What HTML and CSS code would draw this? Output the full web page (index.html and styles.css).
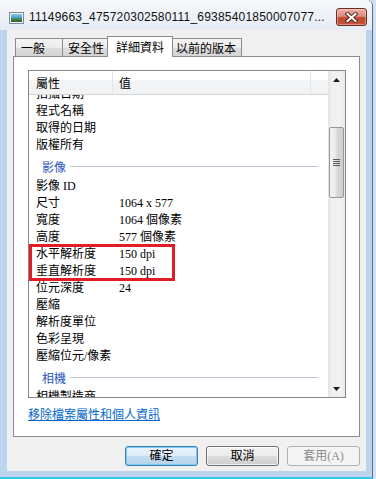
FILE: index.html
```html
<!DOCTYPE html>
<html>
<head>
  <meta charset="UTF-8">
  <title>內容</title>
  <link rel="stylesheet" href="styles.css">
</head>
<body>

  <div class="window">
    <!-- Title bar -->
    <div class="titlebar">
      <svg class="app-icon" width="15" height="12" viewBox="0 0 15 12">
        <defs>
          <linearGradient id="sky" x1="0" y1="0" x2="0" y2="1">
            <stop offset="0" stop-color="#8fc6ee"/>
            <stop offset="0.55" stop-color="#3f95d0"/>
            <stop offset="0.56" stop-color="#4f8f5a"/>
            <stop offset="1" stop-color="#2d5a35"/>
          </linearGradient>
        </defs>
        <rect x="0.5" y="0.5" width="14" height="11" fill="#f4f6f8" stroke="#7d8b99"/>
        <rect x="2" y="2" width="11" height="8" fill="url(#sky)"/>
      </svg>
      <span class="title">11149663_475720302580111_69385401850007077...</span>
      <button class="close-btn">
        <svg width="13" height="11" viewBox="0 0 13 11">
          <path d="M2.5 2 L10.5 9 M10.5 2 L2.5 9" stroke="#5b2820" stroke-width="4" stroke-linecap="square"/>
          <path d="M2.5 2 L10.5 9 M10.5 2 L2.5 9" stroke="#fff" stroke-width="2" stroke-linecap="square"/>
        </svg>
      </button>
    </div>

    <!-- Client area -->
    <div class="client">
      <div class="tabs">
        <div class="tab tab-first">一般</div>
        <div class="tab">安全性</div>
        <div class="tab active">詳細資料</div>
        <div class="tab">以前的版本</div>
      </div>

      <div class="panel">
        <div class="listview">
          <div class="list-main">
            <div class="list-header">
              <div class="hcol">屬性</div>
              <div class="hcol">值</div>
              <div class="hcol hcol-rest"></div>
            </div>
            <div class="rows-clip">
              <div class="rows">
                <div class="row"><span>拍攝日期</span><span></span></div>
                <div class="row"><span>程式名稱</span><span></span></div>
                <div class="row"><span>取得的日期</span><span></span></div>
                <div class="row"><span>版權所有</span><span></span></div>
                <div class="group"><span>影像</span><i></i></div>
                <div class="row"><span>影像 ID</span><span></span></div>
                <div class="row"><span>尺寸</span><span>1064 x 577</span></div>
                <div class="row"><span>寬度</span><span>1064 個像素</span></div>
                <div class="row"><span>高度</span><span>577 個像素</span></div>
                <div class="row"><span>水平解析度</span><span>150 dpi</span></div>
                <div class="row"><span>垂直解析度</span><span>150 dpi</span></div>
                <div class="row"><span>位元深度</span><span>24</span></div>
                <div class="row"><span>壓縮</span><span></span></div>
                <div class="row"><span>解析度單位</span><span></span></div>
                <div class="row"><span>色彩呈現</span><span></span></div>
                <div class="row"><span>壓縮位元/像素</span><span></span></div>
                <div class="group"><span>相機</span><i></i></div>
                <div class="row"><span>相機製造商</span><span></span></div>
              </div>
            </div>
          </div>

          <div class="scrollbar">
            <div class="sb-btn">
              <svg width="7" height="4" viewBox="0 0 7 4"><polygon points="3.5,0 7,4 0,4" fill="#1a1a1a"/></svg>
            </div>
            <div class="sb-track">
              <div class="sb-thumb">
                <svg width="7" height="8" viewBox="0 0 7 8">
                  <path d="M0 0.5 H7 M0 2.5 H7 M0 4.5 H7 M0 6.5 H7" stroke="#5a5a5a" stroke-width="1"/>
                </svg>
              </div>
            </div>
            <div class="sb-btn">
              <svg width="7" height="4" viewBox="0 0 7 4"><polygon points="0,0 7,0 3.5,4" fill="#1a1a1a"/></svg>
            </div>
          </div>

          <!-- red marker drawn over the two resolution rows -->
          <div class="highlight"></div>
        </div>

        <a class="remove-link" href="#">移除檔案屬性和個人資訊</a>
      </div>

      <div class="buttons">
        <button class="btn btn-default">確定</button>
        <button class="btn">取消</button>
        <button class="btn" disabled>套用(A)</button>
      </div>
    </div>
  </div>

</body>
</html>
```

FILE: styles.css
```css
* {
  box-sizing: border-box;
}

html, body {
  margin: 0;
  padding: 0;
  height: 100%;
  overflow: hidden;
  background: #d3e2f2;
}

body {
  font-family: "Liberation Serif", "Noto Sans CJK TC", serif;
  font-size: 12px;
  color: #000;
}

/* Window frame */
.window {
  width: 373px;
  height: 479px;
  display: flex;
  flex-direction: column;
  background: #bcd4ee;
  border-right: 1px solid #5b6c80;
  border-bottom: 2px solid #38c8ea;
  border-top-right-radius: 6px;
  overflow: hidden;
}

.titlebar {
  height: 30px;
  flex-shrink: 0;
  display: flex;
  align-items: center;
  padding: 4px 5px 0 9px;
  background: linear-gradient(#f6f8fb, #e6ecf4);
}

.app-icon {
  flex-shrink: 0;
  margin-top: 2px;
}

.title {
  flex: 1;
  margin-left: 5px;
  font-family: "Liberation Sans", sans-serif;
  font-size: 12px;
  letter-spacing: 0.2px;
  color: #111;
  white-space: nowrap;
  overflow: hidden;
}

.close-btn {
  width: 31px;
  height: 18px;
  padding: 0;
  display: flex;
  align-items: center;
  justify-content: center;
  border: 1px solid #6e2b22;
  border-radius: 3px;
  background: linear-gradient(#eab0a4, #dc8d7e 45%, #c4452f 55%, #c8553d);
  box-shadow: inset 0 0 0 1px rgba(255, 255, 255, 0.35);
}

/* Dialog client area */
.client {
  flex: 1;
  width: 359px;
  margin: 0 0 6px 7px;
  padding: 6px 6px 0;
  background: #f0f0f0;
  display: flex;
  flex-direction: column;
}

.tabs {
  height: 20px;
  display: flex;
  align-items: flex-end;
  padding-left: 2px;
}

.tab {
  height: 18px;
  line-height: 17px;
  padding: 0 5px;
  margin-right: -1px;
  border: 1px solid #898c95;
  border-bottom: none;
  font-family: "Noto Sans CJK TC", sans-serif;
  background: linear-gradient(#f4f4f4, #ececec 50%, #dedede 50%, #d4d4d4);
  white-space: nowrap;
}

.tab-first {
  min-width: 48px;
}

.tab.active {
  position: relative;
  z-index: 1;
  height: 21px;
  line-height: 19px;
  padding: 0 8px;
  margin: 0 -3px -1px -2px;
  background: #fff;
}

.panel {
  height: 381px;
  border: 1px solid #898c95;
  background: #fff;
  padding: 13px 13px 0 14px;
  display: flex;
  flex-direction: column;
}

/* Property list */
.listview {
  position: relative;
  height: 328px;
  border: 1px solid #828790;
  display: flex;
}

.list-main {
  flex: 1;
  min-width: 0;
  display: flex;
  flex-direction: column;
}

.list-header {
  height: 24px;
  display: grid;
  grid-template-columns: 84px 198px 1fr;
  border-bottom: 1px solid #d5d5d5;
  background: linear-gradient(#fff 0, #fff 40%, #f3f4f6 40%, #f1f2f4);
  font-family: "Noto Sans CJK TC", sans-serif;
  line-height: 23px;
}

.hcol {
  padding-left: 7px;
  border-right: 1px solid #e3e5e8;
}

.hcol + .hcol {
  padding-left: 6px;
}

.hcol-rest {
  border-right: none;
}

.rows-clip {
  flex: 1;
  overflow: hidden;
}

.rows {
  margin-top: -9px;
}

.row {
  display: grid;
  grid-template-columns: 83px 1fr;
  height: 17px;
  line-height: 17px;
  white-space: nowrap;
}

.row span {
  padding-left: 7px;
}

.group {
  height: 24px;
  display: flex;
  align-items: center;
  padding: 0 10px 0 13px;
  color: #2a54bd;
  font-family: "Noto Sans CJK TC", sans-serif;
}

.group i {
  flex: 1;
  height: 1px;
  margin: 1px 0 0 4px;
  background: #bcc6da;
}

/* Scroll bar */
.scrollbar {
  width: 17px;
  display: flex;
  flex-direction: column;
  background: linear-gradient(to right, #e4e4e4, #f1f1f1 25%, #f1f1f1 75%, #e9e9e9);
}

.sb-btn {
  height: 17px;
  display: flex;
  align-items: center;
  justify-content: center;
}

.sb-track {
  flex: 1;
  padding-top: 39px;
}

.sb-thumb {
  height: 71px;
  margin: 0 1px;
  border: 1px solid #979797;
  border-radius: 2px;
  background: linear-gradient(to right, #f5f5f5, #e8e8e8 45%, #d6d6d6 55%, #cecece);
  display: flex;
  align-items: center;
  justify-content: center;
}

.highlight {
  position: absolute;
  left: 0;
  top: 173px;
  width: 146px;
  height: 37px;
  border: 3px solid #e11d25;
}

.remove-link {
  align-self: flex-start;
  margin-top: 8px;
  line-height: 16px;
  color: #0066cc;
  font-family: "Noto Sans CJK TC", sans-serif;
  text-decoration: underline;
}

/* Dialog buttons */
.buttons {
  display: flex;
  justify-content: flex-end;
  gap: 8px;
  margin-top: 9px;
}

.btn {
  width: 73px;
  height: 20px;
  padding: 0;
  font-family: "Liberation Serif", "Noto Sans CJK TC", serif;
  font-size: 12px;
  line-height: 18px;
  color: #000;
  border: 1px solid #707070;
  border-radius: 3px;
  background: linear-gradient(#f2f2f2, #ebebeb 50%, #dddddd 50%, #cfcfcf);
  box-shadow: inset 0 0 0 1px rgba(255, 255, 255, 0.7);
}

.btn-default {
  border-color: #3c7fb1;
  background: linear-gradient(#eaf4fb, #dcecf8 50%, #c4def1 50%, #b3d2ea);
  box-shadow: inset 0 0 0 1px #7ecbf1;
}

.btn:disabled {
  color: #8a8a8a;
  border-color: #adb2b5;
  background: #f4f4f4;
  box-shadow: none;
}
```
